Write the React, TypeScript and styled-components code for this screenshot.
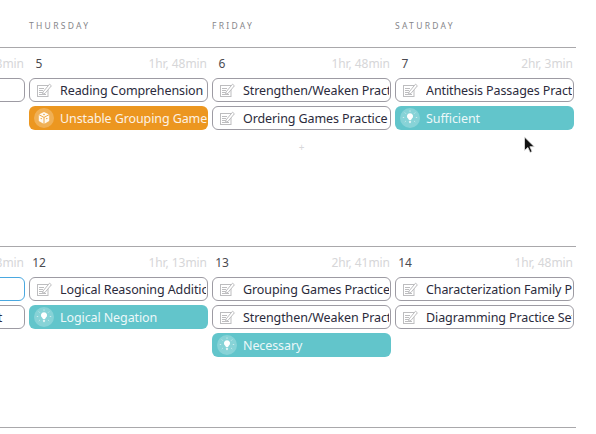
import React from "react";
import styled, { createGlobalStyle } from "styled-components";

const Global = createGlobalStyle`
  html, body { margin: 0; padding: 0; background: #fff; overflow: hidden; }
  body { font-family: "Noto Sans", "Open Sans", sans-serif; }
`;

const Page = styled.div`
  position: relative;
  width: 596px;
  height: 434px;
  overflow: hidden;
`;
const Calendar = styled.div`
  width: 730px;
  margin-left: -154px;
`;
const Grid = styled.div`
  display: grid;
  grid-template-columns: repeat(4, 179px);
  column-gap: 4px;
  padding-right: 2px;
`;
const HeaderRow = styled(Grid)`
  height: 47px;
  border-bottom: 1px solid #a9a8ab;
`;
const DayName = styled.div`
  padding-top: 20px;
  font-size: 8.5px;
  line-height: 12px;
  letter-spacing: 2.3px;
  color: #86868a;
`;
const Week = styled(Grid)<{ $height: number }>`
  height: ${(p) => p.$height}px;
  box-sizing: border-box;
  border-bottom: 1px solid #a9a8ab;
`;
const Day = styled.div`
  display: flex;
  flex-direction: column;
  gap: 4px;
  min-width: 0;
`;
const DayHead = styled.div`
  box-sizing: border-box;
  display: flex;
  justify-content: space-between;
  align-items: center;
  height: 26px;
  padding-top: 4px;
`;
const DayNumber = styled.span`
  width: 20px;
  text-align: center;
  font-size: 12px;
  color: #4a4a50;
`;
const Duration = styled.span`
  padding-right: 1px;
  font-size: 12px;
  letter-spacing: -0.05px;
  color: #d6d6d8;
`;
const Card = styled.div<{ $active?: boolean }>`
  box-sizing: border-box;
  display: flex;
  align-items: center;
  height: 24px;
  padding: 0 1px 0 6px;
  background: #fff;
  border: 1px solid ${(p) => (p.$active ? "#4aa8e0" : "#9d9ba3")};
  border-radius: 6px;
  overflow: hidden;
`;
const Label = styled.span`
  flex: 1;
  margin-left: 7px;
  min-width: 0;
  overflow: hidden;
  white-space: nowrap;
  font-size: 12.5px;
  letter-spacing: -0.1px;
  color: #2b2b3c;
`;
const Pill = styled.div<{ $color: string }>`
  display: flex;
  align-items: center;
  height: 24px;
  padding: 0 1px 0 5px;
  box-sizing: border-box;
  background: ${(p) => p.$color};
  border-radius: 6px;
  overflow: hidden;
`;
const PillIcon = styled.span`
  display: flex;
  align-items: center;
  justify-content: center;
  flex: none;
  width: 20px;
  height: 20px;
  border-radius: 50%;
  background: rgba(255, 255, 255, 0.24);
`;
const PillLabel = styled(Label)`
  margin-left: 6px;
  color: #fff;
  opacity: 0.88;
`;
const Add = styled.div`
  margin-top: 7px;
  text-align: center;
  font-size: 10px;
  line-height: 12px;
  color: #d8d8da;
`;
const Cursor = styled.svg`
  position: absolute;
  left: 523px;
  top: 136px;
`;

const Note = () => (
  <svg width="17" height="15" viewBox="0 0 17 15" fill="none" stroke="#bdbdbf" style={{ flex: "none" }}>
    <rect x="1.5" y="2.5" width="10.5" height="11" strokeWidth="1" />
    <path d="M3 5.5h5M3 7.5h4M3 9.5h6M3 11.5h7" strokeWidth="1" />
    <path d="M7 9 13.5 1.2l1.9 1.6-6.4 7.6-2.4.9z" fill="#fff" strokeWidth="1" />
  </svg>
);

const Bulb = () => (
  <svg width="18" height="18" viewBox="0 0 18 18" fill="none">
    <path d="M9 4.2a3.1 3.1 0 0 0-1.8 5.6c.4.3.6.8.6 1.3h2.4c0-.5.2-1 .6-1.3A3.1 3.1 0 0 0 9 4.2z" fill="#fff" />
    <path d="M7.9 12.3h2.2M8.2 13.6h1.6" stroke="#fff" strokeWidth="0.9" />
    <path d="M9 1.4v1.4M3.8 3.6l1 1M14.2 3.6l-1 1M1.8 8.5h1.4M14.8 8.5h1.4M3.8 13l1-.9M14.2 13l-1-.9" stroke="#fff" strokeWidth="0.8" opacity="0.7" />
  </svg>
);

const Cube = () => (
  <svg width="14" height="14" viewBox="0 0 14 14">
    <path d="M7 1l5.2 2.6v6.4L7 13 1.8 10V3.6z" fill="#fff" opacity="0.92" />
    <path d="M1.8 3.6 7 6.4l5.2-2.8M7 6.4V13" stroke="#ec9720" strokeWidth="0.8" fill="none" />
    <circle cx="4.2" cy="7.6" r="0.7" fill="#ec9720" />
    <circle cx="9.8" cy="7.6" r="0.7" fill="#ec9720" />
    <circle cx="7" cy="3.5" r="0.7" fill="#ec9720" />
  </svg>
);

type Item = { kind: "card" | "bulb" | "cube"; text: string; active?: boolean };
type DayData = { n: number; time: string; items: Item[]; add?: boolean };

const card = (text: string, active?: boolean): Item => ({ kind: "card", text, active });
const bulb = (text: string): Item => ({ kind: "bulb", text });
const cube = (text: string): Item => ({ kind: "cube", text });

const weeks: { height: number; days: DayData[] }[] = [
  {
    height: 199,
    days: [
      { n: 4, time: "1hr, 48min", items: [card("Games Practice")] },
      { n: 5, time: "1hr, 48min", items: [card("Reading Comprehension"), cube("Unstable Grouping Game")] },
      { n: 6, time: "1hr, 48min", add: true, items: [card("Strengthen/Weaken Practice Set"), card("Ordering Games Practice")] },
      { n: 7, time: "2hr, 3min", items: [card("Antithesis Passages Practice Set"), bulb("Sufficient")] },
    ],
  },
  {
    height: 181,
    days: [
      { n: 11, time: "1hr, 48min", items: [card("Games Practice", true), card("Inference Practice Set")] },
      { n: 12, time: "1hr, 13min", items: [card("Logical Reasoning Additional Practice"), bulb("Logical Negation")] },
      { n: 13, time: "2hr, 41min", items: [card("Grouping Games Practice Set"), card("Strengthen/Weaken Practice Set"), bulb("Necessary")] },
      { n: 14, time: "1hr, 48min", items: [card("Characterization Family Practice"), card("Diagramming Practice Set")] },
    ],
  },
];

function Entry({ item }: { item: Item }) {
  if (item.kind === "card") {
    return (
      <Card $active={item.active}>
        <Note />
        <Label>{item.text}</Label>
      </Card>
    );
  }
  return (
    <Pill $color={item.kind === "cube" ? "#ec9720" : "#62c5cb"}>
      <PillIcon>{item.kind === "cube" ? <Cube /> : <Bulb />}</PillIcon>
      <PillLabel>{item.text}</PillLabel>
    </Pill>
  );
}

export default function App() {
  return (
    <Page>
      <Global />
      <Calendar>
        <HeaderRow>
          <DayName>WEDNESDAY</DayName>
          <DayName>THURSDAY</DayName>
          <DayName>FRIDAY</DayName>
          <DayName>SATURDAY</DayName>
        </HeaderRow>
        {weeks.map((w) => (
          <Week key={w.days[0].n} $height={w.height}>
            {w.days.map((d) => (
              <Day key={d.n}>
                <DayHead>
                  <DayNumber>{d.n}</DayNumber>
                  <Duration>{d.time}</Duration>
                </DayHead>
                {d.items.map((it) => (
                  <Entry key={it.text} item={it} />
                ))}
                {d.add && <Add>+</Add>}
              </Day>
            ))}
          </Week>
        ))}
      </Calendar>
      <Cursor width="12" height="18" viewBox="0 0 12 18">
        <path d="M1.5 1v13.5l3.4-3 2.2 5 2-1-2.2-4.8h4.4z" fill="#111" stroke="#e4e4e4" strokeWidth="0.8" />
      </Cursor>
    </Page>
  );
}
